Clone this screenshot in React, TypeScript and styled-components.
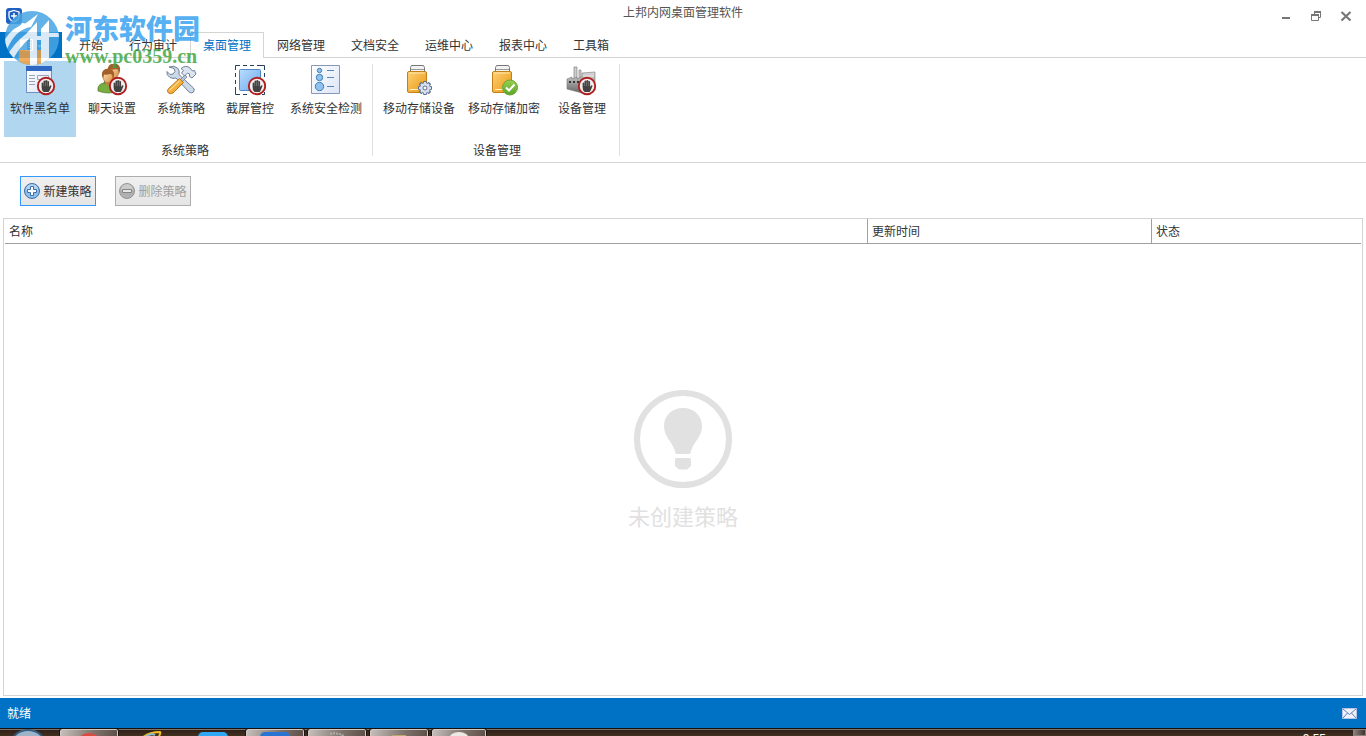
import React from 'react';
import styled, { createGlobalStyle, css } from 'styled-components';

const GlobalStyle = createGlobalStyle`
  * { box-sizing: border-box; }
  body {
    margin: 0;
    background: #fff;
    color: #333;
    font: 12px/18px "Noto Sans CJK SC", "Liberation Sans", sans-serif;
  }
  button { font: inherit; color: inherit; border: 0; padding: 0; background: none; }
`;

const Window = styled.div`
  position: relative;
  display: flex;
  flex-direction: column;
  min-height: 100vh;
`;

const TitleBar = styled.header`
  display: grid;
  grid-template-columns: 100px 1fr 100px;
  align-items: center;
  height: 32px;
  padding: 0 6px;
`;

const Title = styled.h1`
  margin: 0 0 8px;
  font-size: 12px;
  font-weight: 400;
  text-align: center;
  color: #555;
`;

const WindowButtons = styled.div`
  display: flex;
  justify-content: flex-end;
  gap: 14px;
  padding-right: 6px;
`;

const WindowButton = styled.button`
  width: 16px;
  height: 16px;
  svg { display: block; }
`;

const TabRow = styled.nav`
  display: flex;
  height: 26px;
  border-bottom: 1px solid #d4d4d4;
`;

const FileButton = styled.button`
  display: flex;
  align-items: center;
  justify-content: center;
  width: 62px;
  height: 26px;
  margin-right: 4px;
  background: #0072c6;
`;

const Tab = styled.button<{ $active?: boolean }>`
  height: 26px;
  padding: 0 12px 2px;
  border: 1px solid transparent;
  border-bottom: 0;
  ${(p) =>
    p.$active &&
    css`
      color: #0072c6;
      background: #fff;
      border-color: #d4d4d4;
    `}
`;

const Ribbon = styled.section`
  display: flex;
  height: 105px;
  border-bottom: 1px solid #d4d4d4;
`;

const Group = styled.div<{ $pad: string }>`
  display: flex;
  flex-direction: column;
  justify-content: space-between;
  margin: 0 0 6px;
  padding: ${(p) => p.$pad};
  border: 0 solid;
  border-right-width: 1px;
  border-image: linear-gradient(transparent 7px, #e1e1e1 7px) 1;
`;

const GroupItems = styled.div<{ $gap: number }>`
  display: flex;
  gap: ${(p) => p.$gap}px;
`;

const GroupLabel = styled.div`
  text-align: center;
  line-height: 12px;
`;

const RibbonButton = styled.button<{ $width: number; $active?: boolean }>`
  display: flex;
  flex-direction: column;
  align-items: center;
  width: ${(p) => p.$width}px;
  height: 76px;
  padding-top: 3px;
  gap: 3px;
  white-space: nowrap;
  background: ${(p) => (p.$active ? '#b1d6f0' : 'transparent')};
  svg { display: block; flex: none; }
`;

const Toolbar = styled.div`
  display: flex;
  gap: 19px;
  padding: 13px 20px 12px;
`;

const ActionButton = styled.button`
  display: flex;
  align-items: center;
  justify-content: center;
  gap: 3px;
  width: 76px;
  height: 30px;
  border: 1px solid #3399ff;
  background: linear-gradient(#f0f0f0, #e5e5e5);
  white-space: nowrap;
  &:disabled { border-color: #adadad; color: #a0a0a0; }
`;

const Panel = styled.main`
  display: flex;
  flex: 1;
  flex-direction: column;
  margin: 0 3px 2px;
  padding: 0 1px;
  border: 1px solid #d4d4d4;
`;

const PolicyTable = styled.table`
  width: 100%;
  table-layout: fixed;
  border-collapse: separate;
  border-spacing: 0;
`;

const HeadCell = styled.th<{ $width?: number }>`
  width: ${(p) => (p.$width ? `${p.$width}px` : 'auto')};
  height: 25px;
  padding: 0 4px;
  border-bottom: 1px solid #a0a0a0;
  font-weight: 400;
  text-align: left;
  & + & { border-left: 1px solid #a0a0a0; }
`;

const EmptyState = styled.div`
  display: flex;
  flex: 1;
  flex-direction: column;
  align-items: center;
  justify-content: center;
  gap: 10px;
  padding-bottom: 20px;
  color: #e1e1e1;
  font-size: 22px;
  line-height: 32px;
`;

const StatusBar = styled.footer`
  display: flex;
  align-items: center;
  justify-content: space-between;
  height: 30px;
  padding: 0 9px 0 7px;
  background: #0072c6;
  color: #fff;
`;

const Taskbar = styled.div`
  display: flex;
  height: 8px;
  gap: 4px;
  overflow: hidden;
  border-top: 1px solid #15100d;
  background: linear-gradient(#7d736c 1px, #2f2019 1px, #42301f);
`;

const TaskSlot = styled.div<{ $open?: boolean; $width?: number }>`
  display: flex;
  justify-content: center;
  flex: none;
  width: ${(p) => p.$width ?? 58}px;
  ${(p) =>
    p.$open &&
    css`
      border: 1px solid #d0cac6;
      border-bottom: 0;
      border-radius: 2px 2px 0 0;
      outline: 1px solid #1c1410;
      background: linear-gradient(100deg, #c5bfbb, #7d716a 60%, #5f5149);
    `}
`;

const Clock = styled.time`
  margin: 4px 23px 0 auto;
  font: 12px/12px "Liberation Sans", sans-serif;
  color: #fff;
`;

const TraySlot = styled.div`
  width: 13px;
  border: 1px solid #8c817a;
  background: linear-gradient(90deg, #8a8079, #40342d);
`;

const Watermark = styled.div`
  position: absolute;
  top: 9px;
  left: 4px;
  display: flex;
  gap: 5px;
  pointer-events: none;
`;

const WatermarkText = styled.div`
  display: flex;
  flex-direction: column;
  padding-top: 3px;
  white-space: nowrap;
  opacity: 0.82;
`;

const WatermarkName = styled.span`
  font-size: 27px;
  font-weight: 900;
  line-height: 32px;
  color: #329fee;
`;

const WatermarkUrl = styled.span`
  font: bold 20px/24px "Liberation Serif", serif;
  color: #3da53d;
`;

const Stop = ({ x = 22, y = 22 }: { x?: number; y?: number }) => (
  <g transform={`translate(${x} ${y})`}>
    <circle r="8.2" fill="#f4eeee" stroke="#b02020" strokeWidth="1.9" />
    <path
      d="M-4.400 1V-3q.9-1 1.900 0v-2q.9-1 1.900 0v-.6q.9-1 1.900 0v1q.9-.8 1.800 0V1l1-1.600q1.400-.7 1.400.6L3.800 4.200 2.600 6h-5L-4 4z"
      fill="#424242"
    />
    <path d="M-2.400-3v3M-.5-4.500V0M1.400-4V0" stroke="#999" strokeWidth=".5" />
  </g>
);

const Defs = () => (
  <defs>
    <linearGradient id="gold" x2="1" y2="1">
      <stop stopColor="#ffd075" />
      <stop offset="1" stopColor="#e8980f" />
    </linearGradient>
    <linearGradient id="sky" x2="1" y2="1">
      <stop stopColor="#b9dcfb" />
      <stop offset="1" stopColor="#6caaf0" />
    </linearGradient>
    <linearGradient id="steel" x2="0" y2="1">
      <stop stopColor="#dadada" />
      <stop offset="1" stopColor="#666" />
    </linearGradient>
    <linearGradient id="paper" x2="1" y2="1">
      <stop stopColor="#fff" />
      <stop offset="1" stopColor="#dce5f7" />
    </linearGradient>
    <linearGradient id="leaf" x2="0" y2="1">
      <stop stopColor="#9bd04f" />
      <stop offset="1" stopColor="#5aa528" />
    </linearGradient>
    <linearGradient id="skin" x2="1" y2="1">
      <stop stopColor="#ffe0b0" />
      <stop offset="1" stopColor="#d98d43" />
    </linearGradient>
  </defs>
);

const Icon = ({ children }: { children: React.ReactNode }) => (
  <svg width="32" height="32" viewBox="0 0 32 32" fill="none" aria-hidden="true">
    <Defs />
    {children}
  </svg>
);

const BlacklistIcon = () => (
  <Icon>
    <path d="M2.500 2.500h25v26h-25z" fill="url(#paper)" stroke="#6f8fc0" />
    <path d="M2 2h26v5H2z" fill="#2f69c4" />
    <path d="M5 11.500h6M5 14.500h6M5 17.500h6M5 20.500h6" stroke="#9aa3b3" />
    <path d="M13.500 11.500h11v4h-11zM13.500 18.500h5" stroke="#9aa3b3" />
    <Stop />
  </Icon>
);

const Person = ({ x, y, shirt }: { x: number; y: number; shirt: string }) => (
  <g transform={`translate(${x} ${y})`}>
    <path d="M-10 18q-1-7 6-8l4 2 4-2q7 1 7 8-10 4-21 0z" fill={shirt} stroke="#47761f" strokeWidth=".7" />
    <path d="M-3 8h6v3l-3 2-3-2z" fill="#c98241" />
    <ellipse cy="4" rx="4.800" ry="6" fill="url(#skin)" stroke="#9b5d2a" strokeWidth=".6" />
    <path d="M-6 3q-1-7 6-7.500 7 .5 6 7.500l-1 3q0-5-3-5-3 1-6 .5-1 2-1 4z" fill="#a3602b" />
  </g>
);

const ChatIcon = () => (
  <Icon>
    <Person x={18} y={4} shirt="#5a9432" />
    <Person x={12} y={9} shirt="#78ae40" />
    <Stop />
  </Icon>
);

const ToolsIcon = () => (
  <Icon>
    <path
      d="M4 3l5 1.500 1 3-2 2.500-3 .5-3-3Q1 11 5 13.500q3 1.500 6 .5l13 14q2.500 2 4.500 0 1.500-2 0-4L14 10.500q1-4-1.500-6.500Q9 1 4 3z"
      fill="#cbd9e8"
      stroke="#64758d"
      strokeWidth=".9"
    />
    <path
      d="M16 4.500Q21 .5 25 4l2.500 3 2-.5 1.500 3.500-4 4-2.500-1.500v-2.500l-2-1-3 3-3-3 2-2.500z"
      fill="#dce5ef"
      stroke="#64758d"
      strokeWidth=".9"
    />
    <path d="M20 11l2 2-5 5-2-2z" fill="#b4c4d6" stroke="#64758d" strokeWidth=".7" />
    <path d="M14.500 14.500l4 4L8 29q-3 1.500-5-.5-1.500-2 .5-4z" fill="url(#gold)" stroke="#b66a14" strokeWidth=".9" />
    <path d="M14.500 17L5 26" stroke="#ffe2a4" />
  </Icon>
);

const CaptureIcon = () => (
  <Icon>
    <rect x="5.500" y="5.500" width="21" height="21" rx="1" fill="url(#sky)" stroke="#4d88c7" />
    <path
      d="M1.500 6V1.500H6M9 1.500h4m3 0h4m3 0h7.500V6M30.500 9v4M1.500 9v4m0 3v4m0 3v7.500H6M9 30.500h4m15 0h2.500V28"
      stroke="#263f5d"
    />
    <Stop x={23} />
  </Icon>
);

const ChecklistIcon = () => (
  <Icon>
    <path d="M1.500 1.500h28v28h-28z" fill="url(#paper)" stroke="#8798b7" />
    <circle cx="9.500" cy="6.500" r="2.200" fill="#8fc2ef" stroke="#3f7fb9" />
    <circle cx="9.500" cy="13.500" r="3.200" fill="#8fc2ef" stroke="#3f7fb9" />
    <circle cx="9.500" cy="22.500" r="4.200" fill="#8fc2ef" stroke="#3f7fb9" />
    <path d="M17 6.500h7M17 13.500h7M17 22.500h7" stroke="#5a86b9" />
  </Icon>
);

const Storage = () => (
  <>
    <path d="M7.500 10V3.500l1-2h12l1 2V10" fill="#f2f2f2" stroke="#777" />
    <path d="M8 5.500h13" stroke="#999" />
    <rect x="4.500" y="7.500" width="19" height="21" rx="1.500" fill="url(#gold)" stroke="#c28116" />
    <path d="M6 9h16" stroke="#ffe6b0" />
    <path d="M7 25.500h14" stroke="#fff0c8" />
  </>
);

const StorageDeviceIcon = () => (
  <Icon>
    <Storage />
    <path d="M22 17v14M15 24h14M17 19l10 10M27 19L17 29" stroke="#5d6f8c" strokeWidth="3.400" />
    <circle cx="22" cy="24" r="5.400" fill="#d7e0ee" stroke="#5d6f8c" />
    <path d="M22 18v12M16 24h12M18 20l8 8M26 20l-8 8" stroke="#d7e0ee" strokeWidth="2" />
    <circle cx="22" cy="24" r="2" fill="#fff" stroke="#5d6f8c" />
  </Icon>
);

const StorageLockIcon = () => (
  <Icon>
    <Storage />
    <circle cx="22" cy="23.500" r="7.500" fill="url(#leaf)" stroke="#6ba63a" />
    <path d="M18 23.500l3 3 5.500-6" stroke="#fff" strokeWidth="2" />
  </Icon>
);

const DeviceIcon = () => (
  <Icon>
    <path d="M8 3h3v12H8zM13 6h2v9h-2z" fill="#ccc" stroke="#777" strokeWidth=".6" />
    <path d="M1 15l5-2v2l5-2v2l5-2V9l13-1v18l-13 3L1 25z" fill="url(#steel)" stroke="#777" strokeWidth=".6" />
    <path d="M3 18h2m2 0h2m2 0h2" stroke="#333" strokeWidth="2" />
    <path d="M17 12h11" stroke="#eee" />
    <Stop x={21} />
  </Icon>
);

const RoundIcon = ({ kind }: { kind: 'plus' | 'minus' }) => {
  const plus = kind === 'plus';
  return (
    <svg width="16" height="16" viewBox="0 0 16 16" fill="none" aria-hidden="true">
      <circle cx="8" cy="8" r="7.500" fill={plus ? '#8fbce8' : '#b0b0b0'} stroke={plus ? '#3d6fa8' : '#959595'} />
      <path d="M2 7a6 6 0 0 1 12 0q-6 2-12 0z" fill="#fff" opacity=".35" />
      {plus ? (
        <path d="M6.500 3.500h3v3h3v3h-3v3h-3v-3h-3v-3h3z" fill="#fff" stroke="#3c70ab" />
      ) : (
        <path d="M3.500 6.500h9v3h-9z" fill="#e6e6e6" stroke="#858585" />
      )}
    </svg>
  );
};

const WatermarkLogo = () => (
  <svg width="56" height="60" viewBox="0 0 56 60" fill="none" aria-hidden="true" opacity=".85">
    <clipPath id="disc">
      <circle cx="28" cy="29" r="27" />
    </clipPath>
    <g clipPath="url(#disc)">
      <path d="M0 0h56v60H0z" fill="#48a5e3" />
      <path d="M15 41h30v19H15z" fill="#efa042" />
      <g fill="#fff">
        <path d="M0 32Q8 18 22 14L34 5 27 18Q12 20 3 40z" />
        <path d="M3 47Q10 34 22 25l11-12v47h-7V29Q16 37 8 52z" />
        <path d="M37 20l8-9v13h11v4H45v32h-8V31h-4v-4h4z" />
      </g>
    </g>
    <circle cx="19" cy="16" r="2" fill="#fff" />
  </svg>
);

const systemItems = [
  { label: '软件黑名单', width: 72, icon: <BlacklistIcon />, active: true },
  { label: '聊天设置', width: 66, icon: <ChatIcon /> },
  { label: '系统策略', width: 66, icon: <ToolsIcon /> },
  { label: '截屏管控', width: 66, icon: <CaptureIcon /> },
  { label: '系统安全检测', width: 80, icon: <ChecklistIcon /> },
];

const deviceItems = [
  { label: '移动存储设备', width: 80, icon: <StorageDeviceIcon /> },
  { label: '移动存储加密', width: 80, icon: <StorageLockIcon /> },
  { label: '设备管理', width: 66, icon: <DeviceIcon /> },
];

const groups = [
  { label: '系统策略', pad: '3px 6px 0 4px', gap: 3, items: systemItems },
  { label: '设备管理', pad: '3px 4px 0 6px', gap: 5, items: deviceItems },
];

const tabs = ['开始', '行为审计', '桌面管理', '网络管理', '文档安全', '运维中心', '报表中心', '工具箱'];

export default function App() {
  return (
    <Window>
      <GlobalStyle />
      <TitleBar>
        <svg width="16" height="16" viewBox="0 0 16 16" fill="none" aria-hidden="true">
          <rect width="16" height="16" rx="3" fill="#1f5fbf" />
          <path d="M8 2.500l5 1.500v4q0 4-5 6-5-2-5-6V4z" stroke="#fff" strokeWidth="1.300" />
          <path d="M8 5v6M5 8h6" stroke="#fff" strokeWidth="1.500" />
        </svg>
        <Title>上邦内网桌面管理软件</Title>
        <WindowButtons>
          <WindowButton aria-label="最小化">
            <svg width="16" height="16" viewBox="0 0 16 16"><path d="M4 9h8v2H4z" fill="#777" /></svg>
          </WindowButton>
          <WindowButton aria-label="还原">
            <svg width="16" height="16" viewBox="0 0 16 16" fill="none">
              <path d="M3.500 6.500h7v6h-7zM6.500 6V3.500h6v6H11" stroke="#777" />
              <path d="M3 7h8M6 4h7" stroke="#777" strokeWidth="2" />
            </svg>
          </WindowButton>
          <WindowButton aria-label="关闭">
            <svg width="16" height="16" viewBox="0 0 16 16" fill="none">
              <path d="M3.500 4l9 8.500M12.500 4l-9 8.500" stroke="#777" strokeWidth="2.200" />
            </svg>
          </WindowButton>
        </WindowButtons>
      </TitleBar>

      <TabRow>
        <FileButton aria-label="文件">
          <svg width="24" height="12" viewBox="0 0 24 12" fill="none" aria-hidden="true">
            <path d="M1 .5h6v11H1z" fill="#fff" />
            <path d="M7.500.5h6v11h-6zM9 3.500h3M9 6h3M9 8.500h3" stroke="#fff" />
            <path d="M18 6h5l-2.500 3z" fill="#fff" />
          </svg>
        </FileButton>
        {tabs.map((tab) => (
          <Tab key={tab} $active={tab === '桌面管理'}>{tab}</Tab>
        ))}
      </TabRow>

      <Ribbon>
        {groups.map((group) => (
          <Group key={group.label} $pad={group.pad}>
            <GroupItems $gap={group.gap}>
              {group.items.map((item) => (
                <RibbonButton key={item.label} $width={item.width} $active={'active' in item}>
                  {item.icon}
                  {item.label}
                </RibbonButton>
              ))}
            </GroupItems>
            <GroupLabel>{group.label}</GroupLabel>
          </Group>
        ))}
      </Ribbon>

      <Toolbar>
        <ActionButton><RoundIcon kind="plus" />新建策略</ActionButton>
        <ActionButton disabled><RoundIcon kind="minus" />删除策略</ActionButton>
      </Toolbar>

      <Panel>
        <PolicyTable>
          <thead>
            <tr>
              <HeadCell>名称</HeadCell>
              <HeadCell $width={284}>更新时间</HeadCell>
              <HeadCell $width={210}>状态</HeadCell>
            </tr>
          </thead>
        </PolicyTable>
        <EmptyState>
          <svg width="100" height="100" viewBox="0 0 100 100" aria-hidden="true">
            <circle cx="50" cy="50" r="46" fill="none" stroke="#e1e1e1" strokeWidth="6" />
            <path
              d="M50 19C38.500 19 31 27 31 37c0 11 8 15 11 25q0 3 2 3h12q2 0 2-3c3-10 11-14 11-25 0-10-7.500-18-19-18zM43.500 69h13q1.500 0 1.500 1.500V77l-4 3.500h-8L42 77v-6.500q0-1.500 1.500-1.500z"
              fill="#e1e1e1"
            />
          </svg>
          未创建策略
        </EmptyState>
      </Panel>

      <StatusBar>
        <span>就绪</span>
        <svg width="15" height="11" viewBox="0 0 15 11" fill="none" aria-hidden="true">
          <path d="M.5.5h14v10H.5z" fill="#eef2fc" stroke="#b7c3e4" />
          <path d="M1 1l6.500 5.500L14 1M1 10l4.500-5M14 10L9.500 5" stroke="#687eb5" />
        </svg>
      </StatusBar>

      <Taskbar>
        <TaskSlot $width={56}>
          <svg width="30" height="8" viewBox="0 0 30 8"><ellipse cx="15" cy="14" rx="16" ry="13" fill="#9db4c8" stroke="#345f83" strokeWidth="2" /></svg>
        </TaskSlot>
        <TaskSlot $open>
          <svg width="24" height="8" viewBox="0 0 24 8"><ellipse cx="12" cy="13" rx="12" ry="10" fill="#dc4b40" /></svg>
        </TaskSlot>
        <TaskSlot>
          <svg width="28" height="8" viewBox="0 0 28 8" fill="none">
            <path d="M5 9q7-6 18-6 1 1-1 4" stroke="#f1bd21" strokeWidth="2" />
            <path d="M8 8q6-4 10-2" stroke="#8cb9cf" strokeWidth="2" />
          </svg>
        </TaskSlot>
        <TaskSlot>
          <svg width="32" height="8" viewBox="0 0 32 8"><rect x="1" y="3" width="30" height="12" rx="5" fill="#2fa8f5" /></svg>
        </TaskSlot>
        <TaskSlot $open>
          <svg width="32" height="8" viewBox="0 0 32 8"><rect x="1" y="2" width="30" height="12" rx="5" fill="#2874d2" /></svg>
        </TaskSlot>
        <TaskSlot $open>
          <svg width="20" height="8" viewBox="0 0 20 8" fill="none"><path d="M3 4q7-2 14 2" stroke="#a9b0aa" strokeWidth="2" strokeDasharray="2 1" /></svg>
        </TaskSlot>
        <TaskSlot $open>
          <svg width="20" height="8" viewBox="0 0 20 8"><path d="M3 5h14v3H3z" fill="#bda86c" /></svg>
        </TaskSlot>
        <TaskSlot $open $width={54}>
          <svg width="22" height="8" viewBox="0 0 22 8"><ellipse cx="11" cy="9" rx="10" ry="7" fill="#ece9e4" /></svg>
        </TaskSlot>
        <Clock>9:55</Clock>
        <TraySlot />
      </Taskbar>

      <Watermark>
        <WatermarkLogo />
        <WatermarkText>
          <WatermarkName>河东软件园</WatermarkName>
          <WatermarkUrl>www.pc0359.cn</WatermarkUrl>
        </WatermarkText>
      </Watermark>
    </Window>
  );
}
